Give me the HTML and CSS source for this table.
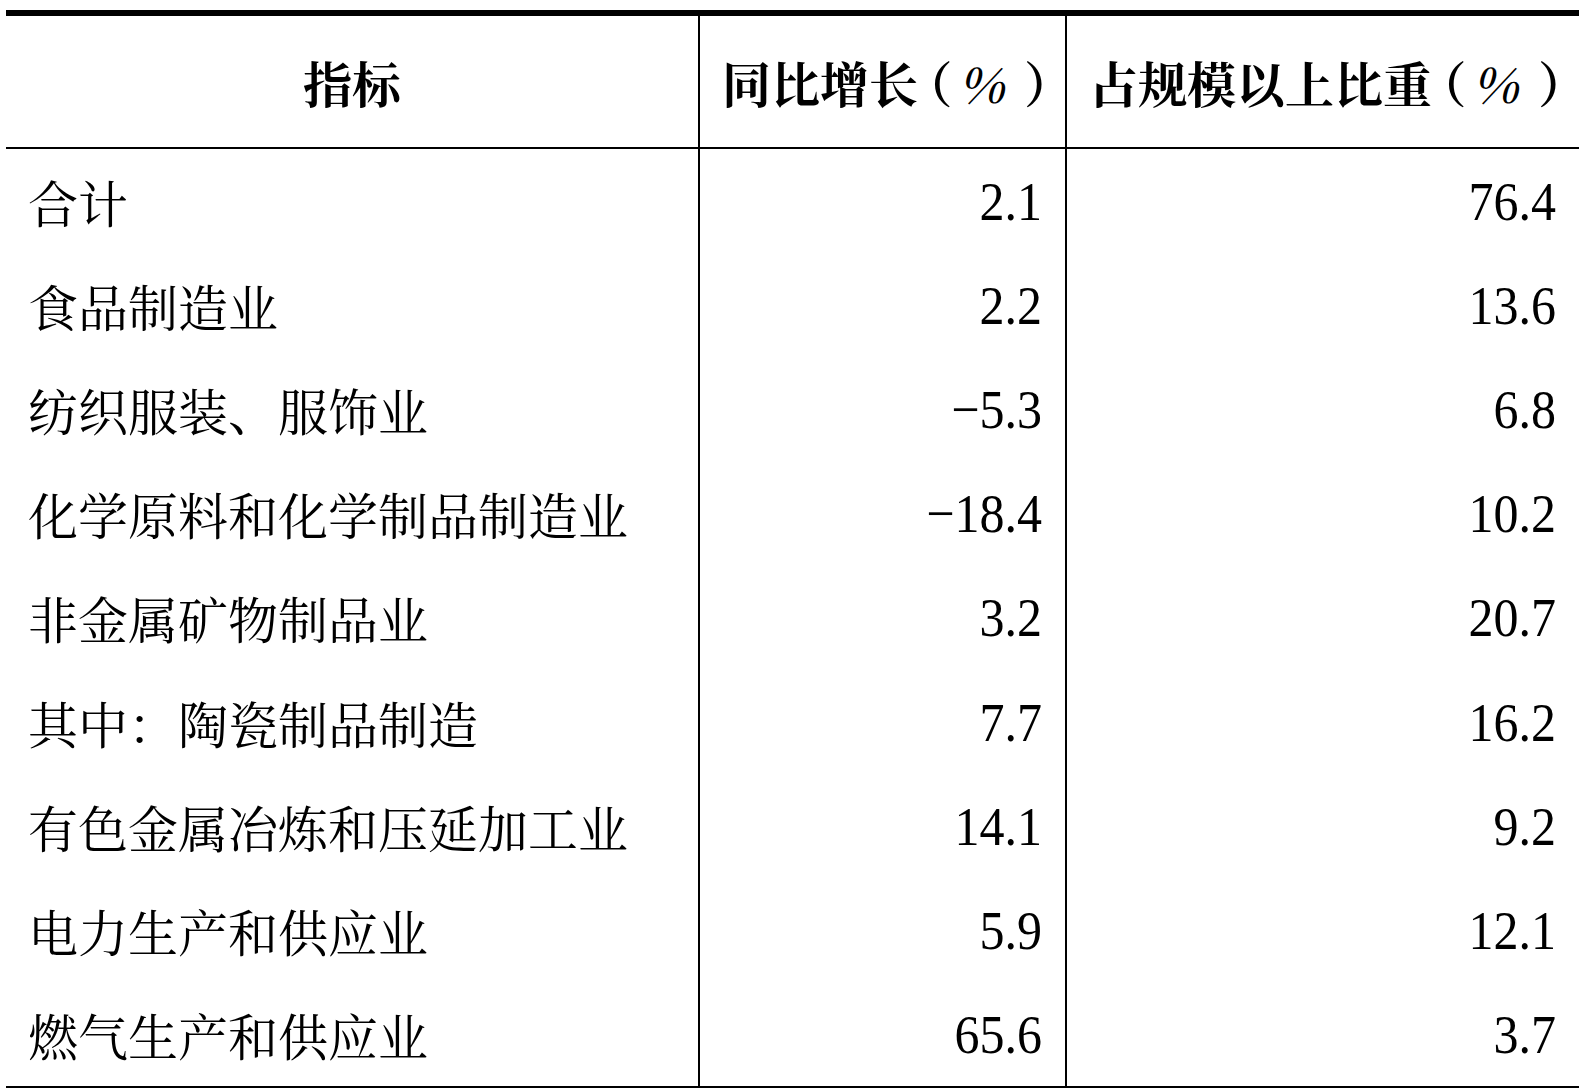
FILE: index.html
```html
<!DOCTYPE html>
<html lang="zh-CN">
<head>
<meta charset="utf-8">
<title>规模以上工业增加值</title>
<link rel="stylesheet" href="styles.css">
</head>
<body>
<table class="stats">
  <colgroup>
    <col class="c1">
    <col class="c2">
    <col class="c3">
  </colgroup>
  <thead>
    <tr class="head">
      <th class="h-name">指标</th>
      <th class="h-val">同比增长<span class="lp">（</span><span class="pct">%</span><span class="rp">）</span></th>
      <th class="h-val">占规模以上比重<span class="lp">（</span><span class="pct">%</span><span class="rp">）</span></th>
    </tr>
  </thead>
  <tbody>
    <tr><td class="name">合计</td><td class="num"><span class="v">2.1</span></td><td class="num"><span class="v">76.4</span></td></tr>
    <tr><td class="name">食品制造业</td><td class="num"><span class="v">2.2</span></td><td class="num"><span class="v">13.6</span></td></tr>
    <tr><td class="name">纺织服装、服饰业</td><td class="num"><span class="v">−5.3</span></td><td class="num"><span class="v">6.8</span></td></tr>
    <tr><td class="name">化学原料和化学制品制造业</td><td class="num"><span class="v">−18.4</span></td><td class="num"><span class="v">10.2</span></td></tr>
    <tr><td class="name">非金属矿物制品业</td><td class="num"><span class="v">3.2</span></td><td class="num"><span class="v">20.7</span></td></tr>
    <tr><td class="name">其中：陶瓷制品制造</td><td class="num"><span class="v">7.7</span></td><td class="num"><span class="v">16.2</span></td></tr>
    <tr><td class="name">有色金属冶炼和压延加工业</td><td class="num"><span class="v">14.1</span></td><td class="num"><span class="v">9.2</span></td></tr>
    <tr><td class="name">电力生产和供应业</td><td class="num"><span class="v">5.9</span></td><td class="num"><span class="v">12.1</span></td></tr>
    <tr><td class="name">燃气生产和供应业</td><td class="num"><span class="v">65.6</span></td><td class="num"><span class="v">3.7</span></td></tr>
  </tbody>
</table>
</body>
</html>
```
FILE: styles.css
```css
html, body {
  margin: 0;
  padding: 0;
  background: #fff;
  overflow: hidden;
}

body {
  font-family: "Liberation Serif", "Noto Serif CJK SC", "Noto Sans CJK SC", serif;
  color: #000;
}

.stats {
  margin: 10px 0 0 6px;
  width: 1573px;
  table-layout: fixed;
  border-collapse: separate;
  border-spacing: 0;
  border-top: 6px solid #000;
  border-bottom: 2px solid #000;
}

.c1 { width: 692px; }
.c2 { width: 367px; }
.c3 { width: 514px; }

.stats th,
.stats td {
  padding: 0;
  white-space: nowrap;
}

.stats th + th,
.stats td + td {
  border-left: 2px solid #000;
}

.head {
  height: 133px;
}

.head th {
  border-bottom: 2px solid #000;
  font-family: "Noto Serif CJK SC", "Noto Sans CJK SC", serif;
  font-weight: 700;
  font-size: 49px;
  vertical-align: middle;
}

.h-name {
  text-align: center;
}

.h-val {
  text-align: left;
  padding-left: 22px !important;
}

.lp {
  font-feature-settings: "halt" 1;
  margin-left: 10px;
}

.pct {
  font-family: "Noto Serif CJK SC", "Noto Sans CJK SC", serif;
  font-style: italic;
  font-weight: 600;
  font-size: 48px;
  margin-left: 6px;
}

.rp {
  font-feature-settings: "halt" 1;
  margin-left: 20px;
}

.stats tbody tr {
  height: 104.1px;
}

.name {
  padding-left: 22px !important;
  font-family: "Noto Serif CJK SC", "Noto Sans CJK SC", serif;
  font-size: 50px;
  font-weight: 400;
  text-align: left;
}

.num {
  padding-right: 23px !important;
  font-family: "Liberation Serif", serif;
  font-size: 50px;
  text-align: right;
}

.v {
  display: inline-block;
  transform: scaleY(1.1);
}
```
